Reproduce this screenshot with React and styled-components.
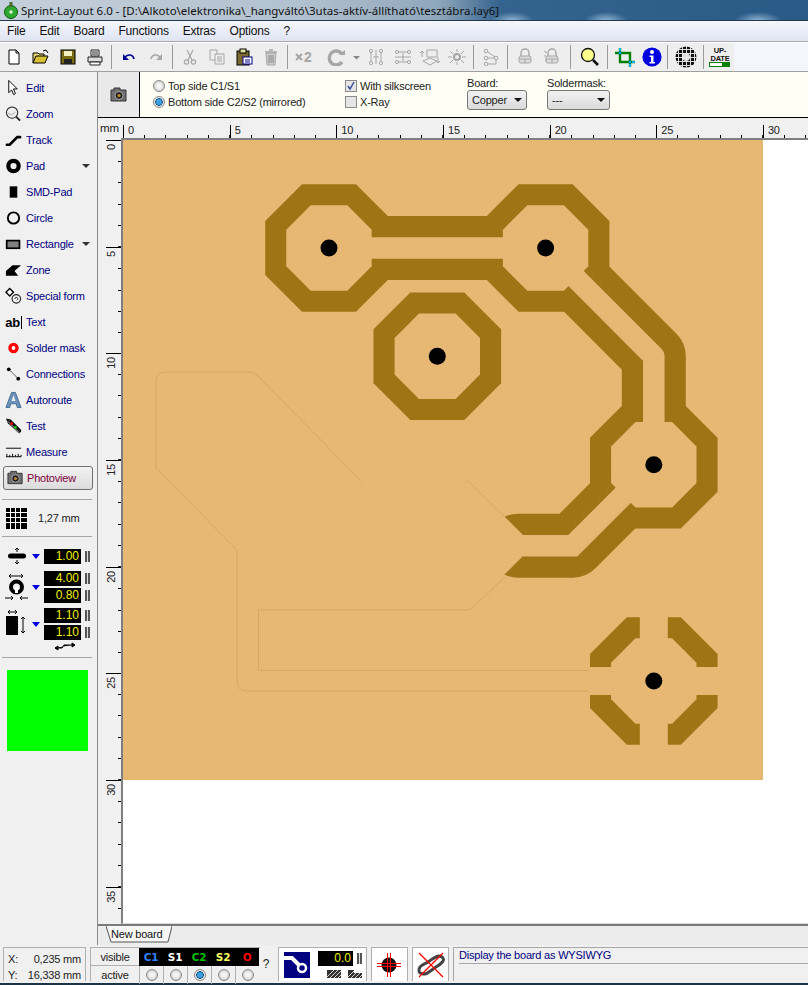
import styled, { createGlobalStyle } from "styled-components"

const GlobalStyle = createGlobalStyle`
  html, body { margin: 0; padding: 0; background: #f0f0f0; }
  * { box-sizing: border-box; }
`

const Window = styled.div`
  width: 808px;
  height: 985px;
  overflow: hidden;
  display: flex;
  flex-direction: column;
  font-family: "Liberation Sans", "Noto Sans", sans-serif;
  font-size: 11px;
  letter-spacing: -.2px;
  color: #222;
  background: #f0f0f0;
`
const TitleBar = styled.div`
  height: 21px;
  flex: none;
  display: flex;
  align-items: center;
  gap: 1px;
  padding-left: 2px;
  font-family: "Noto Sans", sans-serif;
  font-size: 11.5px;
  letter-spacing: 0;
  color: #111;
  white-space: nowrap;
  border-bottom: 1px solid #24384c;
  background:
    radial-gradient(ellipse 22px 9px at 512px 21px, rgba(180,215,240,.75), transparent),
    radial-gradient(ellipse 22px 9px at 606px 21px, rgba(180,215,240,.75), transparent),
    radial-gradient(ellipse 24px 9px at 758px 21px, rgba(180,215,240,.75), transparent),
    linear-gradient(90deg, #c4d0db 0, #b2c1cf 300px, #8ea6bb 440px, #34638e 500px, #2a5a87 808px);
`
const MenuBar = styled.div`
  height: 21px;
  flex: none;
  display: flex;
  align-items: center;
  padding-left: 7px;
  gap: 14px;
  font-size: 12px;
  color: #111;
  background: linear-gradient(#f4f6fb, #dfe4f3);
  border-bottom: 1px solid #a8a8a8;
`
const ToolBar = styled.div`
  height: 30px;
  flex: none;
  display: flex;
  align-items: center;
  background: #eeeeee;
  border-top: 1px solid #fff;
  border-bottom: 1px solid #a0a0a0;
`
const ToolRest = styled.div`
  flex: 1;
  align-self: stretch;
  background: #f3f6fc;
`
const ToolBtn = styled.div`
  width: ${p => p.$w || 27}px;
  height: 24px;
  flex: none;
  display: flex;
  align-items: center;
  justify-content: center;
`
const ToolSep = styled.div`
  width: ${p => p.$w || 7}px;
  height: 24px;
  flex: none;
  display: flex;
  justify-content: center;
  &::before {
    content: "";
    width: 1px;
    background: #9a9a9a;
  }
`
const Main = styled.div`
  flex: 1;
  min-height: 0;
  display: flex;
`
const Sidebar = styled.aside`
  width: 98px;
  flex: none;
  background: #f0f0f0;
  border-right: 1px solid #8e8e8e;
  padding-top: 3px;
  display: flex;
  flex-direction: column;
`
const SideItem = styled.div`
  height: 26px;
  flex: none;
  display: flex;
  align-items: center;
  padding-left: 5px;
  gap: 4px;
  color: #000080;
  position: relative;
`
const IconSlot = styled.span`
  width: 17px;
  height: 20px;
  flex: none;
  display: flex;
  align-items: center;
  justify-content: center;
`
const Caret = styled.span`
  width: 0;
  height: 0;
  border-left: 4px solid transparent;
  border-right: 4px solid transparent;
  border-top: 4px solid ${p => p.$color || "#333"};
  position: absolute;
  left: ${p => p.$left || 82}px;
  top: 11px;
`
const PhotoButton = styled.div`
  margin: 1px 4px 0 3px;
  height: 24px;
  flex: none;
  display: flex;
  align-items: center;
  gap: 3px;
  padding-left: 3px;
  color: #800040;
  border: 1px solid #707070;
  border-radius: 3px;
  background: linear-gradient(#f2f2f2, #dcdcdc);
`
const SideRule = styled.div`
  height: 1px;
  flex: none;
  margin: ${p => p.$m || "9px 5px 5px 2px"};
  background: #a6a6a6;
`
const GridRow = styled.div`
  height: 26px;
  flex: none;
  display: flex;
  align-items: center;
  padding-left: 6px;
  gap: 11px;
  color: #222;
`
const ValueBlock = styled.div`
  display: flex;
  align-items: center;
  padding-left: 4px;
  margin-bottom: ${p => p.$mb || 0}px;
  position: relative;
`
const ValueGlyph = styled.div`
  width: 26px;
  flex: none;
  display: flex;
  justify-content: center;
`
const BlueCaret = styled.span`
  width: 0;
  height: 0;
  margin: 0 4px 0 2px;
  flex: none;
  border-left: 4px solid transparent;
  border-right: 4px solid transparent;
  border-top: 5px solid #0000e0;
`
const ValueStack = styled.div`
  display: flex;
  flex-direction: column;
  gap: 2px;
`
const ValueRow = styled.div`
  display: flex;
  align-items: center;
  gap: 4px;
`
const ValueBox = styled.div`
  width: ${p => p.$w || 37}px;
  height: 15px;
  background: #000;
  color: #f0f000;
  font-size: 12px;
  letter-spacing: 0;
  line-height: 15px;
  text-align: right;
  padding-right: 2px;
`
const Grip = styled.span`
  width: 5px;
  height: 11px;
  flex: none;
  background: linear-gradient(90deg, #555 0 2px, #ddd 2px 3px, #555 3px 5px);
`
const SwapRow = styled.div`
  display: flex;
  justify-content: flex-end;
  padding-right: 21px;
  margin-top: 2px;
  height: 10px;
`
const GreenBox = styled.div`
  margin: 12px 0 0 7px;
  width: 81px;
  height: 81px;
  flex: none;
  background: #00ff00;
`
const Work = styled.div`
  flex: 1;
  min-width: 0;
  display: flex;
  flex-direction: column;
`
const PhotoBar = styled.div`
  height: 46px;
  flex: none;
  display: flex;
  background: #fffff6;
  border-bottom: 1px solid #000;
`
const CameraCell = styled.div`
  width: 42px;
  flex: none;
  display: flex;
  align-items: center;
  justify-content: center;
  background: #e9e9e9;
  border-right: 1px solid #000;
`
const OptionCol = styled.div`
  width: ${p => p.$w}px;
  flex: none;
  display: flex;
  flex-direction: column;
  padding: 7px 0 0 ${p => p.$pl || 0}px;
  gap: 2px;
`
const OptionLine = styled.div`
  height: 14px;
  display: flex;
  align-items: center;
  gap: 3px;
  color: #222;
  white-space: nowrap;
`
const Radio = styled.span`
  width: 12px;
  height: 12px;
  flex: none;
  border-radius: 50%;
  border: 1px solid #8a8a8a;
  background: ${p => p.$on
    ? "radial-gradient(circle, #3aa0e0 0 2.5px, #10507c 3.5px, #e8e8e8 4px)"
    : "radial-gradient(circle, #f4f4f4 0 2px, #d2d2d2 5px)"};
`
const Check = styled.span`
  width: 12px;
  height: 12px;
  flex: none;
  display: flex;
  border: 1px solid #8a8a8a;
  background: #e6e6e6;
`
const SelectCol = styled.div`
  width: ${p => p.$w}px;
  flex: none;
  padding-top: 5px;
  color: #222;
`
const SelectBox = styled.div`
  width: ${p => p.$w}px;
  height: 20px;
  margin-top: 1px;
  padding: 0 4px;
  display: flex;
  align-items: center;
  justify-content: space-between;
  border: 1px solid #777;
  border-radius: 3px;
  background: linear-gradient(#f2f2f2, #dadada);
  &::after {
    content: "";
    border-left: 4px solid transparent;
    border-right: 4px solid transparent;
    border-top: 4px solid #111;
  }
`
const HRuler = styled.div`
  height: 20px;
  flex: none;
  display: flex;
  align-items: flex-end;
  background: #f0f0f0;
  position: relative;
  padding-left: 25px;
`
const MmLabel = styled.span`
  position: absolute;
  left: 2px;
  top: 4px;
  font-size: 11.5px;
`
const HCell = styled.div`
  width: 106.67px;
  height: 13px;
  flex: none;
  font-size: 11px;
  line-height: 11px;
  padding-left: 4px;
  border-left: 1px solid #000;
  background: repeating-linear-gradient(90deg, transparent 0 20.33px, #000 20.33px 21.33px) bottom / 100% 3px no-repeat;
`
const CanvasRow = styled.div`
  flex: 1;
  min-height: 0;
  display: flex;
`
const VRuler = styled.div`
  width: 23px;
  flex: none;
  overflow: hidden;
  background: #f0f0f0;
  padding: 2px 0 0 8px;
  display: flex;
  flex-direction: column;
`
const VCell = styled.div`
  height: 106.67px;
  flex: none;
  border-top: 1px solid #000;
  font-size: 11px;
  line-height: 11px;
  padding-top: 3px;
  background: repeating-linear-gradient(180deg, transparent 0 20.33px, #000 20.33px 21.33px) right / 3px 100% no-repeat;
`
const VLabel = styled.span`
  display: block;
  writing-mode: vertical-rl;
  transform: rotate(180deg);
`
const Canvas = styled.div`
  flex: 1;
  min-width: 0;
  background: #fff;
  border-left: 2px solid #808080;
  border-top: 2px solid #808080;
  border-bottom: 1px solid #d8d8d8;
`
const Board = styled.div`
  width: 640px;
  height: 640px;
  background: #e6b873;
`
const BoardSvg = styled.svg`
  display: block;
  width: 640px;
  height: 640px;
`
const TabRow = styled.div`
  height: 21px;
  flex: none;
  padding-left: 8px;
  background: #ececec;
  border-top: 2px solid #7a7a7a;
`
const Tab = styled.div`
  width: 66px;
  height: 18px;
  padding-left: 5px;
  line-height: 16px;
  font-size: 11px;
  color: #111;
  position: relative;
`
const TabEdge = styled.svg`
  position: absolute;
  left: 0;
  top: 0;
  z-index: 0;
`
const TabLabel = styled.span`
  position: relative;
`
const StatusBar = styled.footer`
  height: 40px;
  flex: none;
  display: flex;
  align-items: stretch;
  background: #f0f0f0;
  padding: 2px 0 2px 3px;
  border-bottom: 2px solid #1d3346;
`
const CoordPanel = styled.div`
  width: 83px;
  flex: none;
  border: 1px solid #b0b0b0;
  border-bottom: 0;
  padding: 4px 4px 0 4px;
  color: #222;
  display: flex;
  flex-direction: column;
  gap: 3px;
`
const CoordLine = styled.div`
  height: 14px;
  display: flex;
  align-items: center;
  justify-content: space-between;
`
const LayerTable = styled.div`
  margin-left: 4px;
  width: 170px;
  flex: none;
  display: grid;
  grid-template-columns: 48px repeat(5, 24px);
  grid-template-rows: 18px 18px;
  border-left: 1px solid #b0b0b0;
  border-top: 1px solid #b0b0b0;
`
const RowName = styled.div`
  display: flex;
  align-items: center;
  justify-content: center;
  color: #222;
  border-bottom: ${p => p.$line ? "1px solid #b0b0b0" : "0"};
`
const LayerName = styled.div`
  background: #000;
  color: ${p => p.$color};
  font-family: "DejaVu Sans", sans-serif;
  font-weight: 700;
  font-size: 10.5px;
  display: flex;
  align-items: center;
  justify-content: center;
`
const LayerRadio = styled.div`
  display: flex;
  align-items: center;
  justify-content: center;
  border-left: 1px solid #b0b0b0;
`
const Hint = styled.div`
  width: 12px;
  flex: none;
  font-size: 12px;
  display: flex;
  align-items: center;
  justify-content: center;
`
const WhitePanel = styled.div`
  width: ${p => p.$w}px;
  margin-left: ${p => p.$ml || 4}px;
  flex: none;
  background: #fff;
  border: 1px solid #b0b0b0;
  border-bottom: 0;
  display: flex;
  align-items: center;
  padding-left: ${p => p.$pl || 0}px;
`
const DisplayStack = styled.div`
  margin-left: 8px;
  display: flex;
  flex-direction: column;
  align-items: flex-end;
  gap: 4px;
`
const HatchRow = styled.div`
  width: 35px;
  display: flex;
  justify-content: space-between;
`
const MessagePanel = styled.div`
  flex: 1;
  margin-left: 4px;
  border-left: 1px solid #a8a8a8;
  border-top: 1px solid #a8a8a8;
  padding-left: 5px;
  color: #000080;
`
const MessageLine = styled.div`
  height: 16px;
  line-height: 14px;
  border-bottom: 1px solid #a8a8a8;
`

// toolbar drawings
const Ico = ({ w = 18, h = 18, children }) => (
  <svg width={w} height={h} viewBox={`0 0 ${w} ${h}`} fill="none">{children}</svg>
)
const grey = "#a6a6a6"

const NewIcon = () => <Ico><path d="M4 2h7l3 3v11H4z" fill="#fff" stroke="#000" /><path d="M11 2v3h3" stroke="#000" /></Ico>
const OpenIcon = () => <Ico><path d="M1 15V5h5l1 1h5v2" fill="#e8d870" stroke="#000" /><path d="M1 15l3-7h12l-3 7z" fill="#d8c030" stroke="#000" /><path d="M11 3l3-1 2 3" stroke="#000" /></Ico>
const SaveIcon = () => <Ico><rect x="2" y="2" width="14" height="14" fill="#7a6a10" stroke="#000" /><rect x="5" y="3" width="8" height="5" fill="#f0f0c0" /><rect x="5" y="11" width="8" height="5" fill="#222" /></Ico>
const PrintIcon = () => <Ico><path d="M5 2h8v6H5z" fill="#fff" stroke="#222" /><path d="M2 9h14v5H2z" fill="#ddd" stroke="#222" /><path d="M4 14h10v3H4z" fill="#fff" stroke="#222" /><path d="M6 4h6M6 6h6" stroke="#222" /></Ico>
const UndoIcon = ({ c = "#000090" }) => <Ico><path d="M5 9c3-3 8-3 9 2" stroke={c} strokeWidth="1.6" /><path d="M3 6v6h6z" fill={c} /></Ico>
const RedoIcon = () => <Ico><path d="M13 9c-3-3-8-3-9 2" stroke={grey} strokeWidth="1.6" /><path d="M15 6v6H9z" fill={grey} /></Ico>
const CutIcon = () => <Ico><path d="M6 2l5 10M12 2L7 12" stroke={grey} strokeWidth="1.2" /><circle cx="5.500" cy="14" r="2.200" stroke={grey} strokeWidth="1.2" /><circle cx="12.500" cy="14" r="2.200" stroke={grey} strokeWidth="1.2" /></Ico>
const CopyIcon = () => <Ico><path d="M2 2h7v10H2z" fill="#eee" stroke={grey} /><path d="M7 6h9v10H7z" fill="#eee" stroke={grey} /><path d="M9 9h5M9 11h5M9 13h5" stroke={grey} /></Ico>
const PasteIcon = () => <Ico><rect x="2" y="3" width="12" height="14" fill="#7a6a30" stroke="#000" /><rect x="5" y="1" width="6" height="4" fill="#e0e0a0" stroke="#000" /><rect x="8" y="9" width="9" height="7" fill="#fff" stroke="#000090" /><path d="M10 12h5M10 14h5" stroke="#000090" /></Ico>
const TrashIcon = () => <Ico><path d="M4 5h10l-1 12H5z" fill="#ccc" stroke={grey} /><path d="M3 4h12M7 2h4" stroke={grey} strokeWidth="1.6" /><path d="M7 7v8M9 7v8M11 7v8" stroke="#888" /></Ico>
const TimesTwo = () => <Ico w={26}><path d="M3 6l6 6M9 6l-6 6" stroke={grey} strokeWidth="2" /><text x="11" y="14" fontFamily="Liberation Sans" fontWeight="700" fontSize="14" fill={grey}>2</text></Ico>
const RotateIcon = () => <Ico w={20}><path d="M16 6a7 7 0 1 0 0 8" stroke={grey} strokeWidth="3.4" /><path d="M13 7h6V2z" fill={grey} /></Ico>
const SmallCaret = () => <Ico w={9} h={5}><path d="M1 1h7L4.500 4.500z" fill="#888" /></Ico>
const MirrorIcon = () => <Ico><g stroke={grey}><circle cx="4" cy="3" r="1.6" /><circle cx="4" cy="15" r="1.6" /><circle cx="14" cy="3" r="1.6" /><circle cx="14" cy="15" r="1.6" /><path d="M4 5v8M14 5v8M9 2v14M6 9h6" /></g></Ico>
const AlignIcon = () => <Ico><g stroke={grey}><circle cx="3" cy="4" r="1.6" /><circle cx="15" cy="4" r="1.6" /><circle cx="3" cy="14" r="1.6" /><circle cx="15" cy="14" r="1.6" /><path d="M5 4h8M5 14h8M1 9h16M9 5v8" /></g></Ico>
const LayerSwapIcon = () => <Ico w={22}><g stroke={grey}><path d="M8 2h10v7H8zM3 9V3M1 5l2-2 2 2M4 13l7-3 7 3-7 4z" /><path d="M19 9v6M17 13l2 2 2-2" /></g></Ico>
const ExplodeIcon = () => <Ico w={20}><g stroke={grey}><circle cx="10" cy="9" r="3" strokeWidth="2" /><path d="M1 9h4M15 9h4M10 1v3M10 14v3M3 3l3 3M17 3l-3 3M3 15l3-3M17 15l-3-3" /></g></Ico>
const NodesIcon = () => <Ico><g stroke={grey}><circle cx="4" cy="3" r="1.8" /><circle cx="4" cy="10" r="1.8" /><circle cx="4" cy="16" r="1.8" /><circle cx="14" cy="10" r="1.8" /><path d="M6 4l7 5M6 10h6M6 16h8v-4M14 10" /></g></Ico>
const LockIcon = ({ x }) => <Ico><path d="M5 8V5a4 4 0 0 1 8 0v3" stroke={grey} strokeWidth="1.4" /><rect x="3" y="8" width="12" height="7" rx="2" fill="#ddd" stroke={grey} /><path d="M3 11h12M9 11v4" stroke={grey} />{x && <path d="M1 3l3 2M1 8h2M2 13l2-1" stroke={grey} />}</Ico>
const LoupeIcon = () => <Ico w={20} h={20}><circle cx="8" cy="8" r="6.500" fill="#ffff90" stroke="#111" strokeWidth="1.3" /><path d="M13 13l5 5" stroke="#111" strokeWidth="2.6" /></Ico>
const CropIcon = () => <Ico w={22} h={20}><path d="M6 1v14h15M1 6h15v14" stroke="#008000" strokeWidth="2.4" /><path d="M4.800 4.800h2.400v2.400H4.800zM14.800 13.800h2.400v2.400h-2.400z" fill="#00a0ff" /><path d="M5 1h2v3H5zM18 14h3v2h-3zM15 17h2v3h-2z" fill="#00b0ff" /></Ico>
const InfoIcon = () => <Ico w={20} h={20}><circle cx="10" cy="10" r="9.600" fill="#0000e0" /><circle cx="10" cy="5" r="2" fill="#fff" /><path d="M7.500 8.500h4V15H13v1.500H7.500V15H9V10H7.500z" fill="#fff" /></Ico>
const GridBallIcon = () => (
  <Ico w={22} h={22}>
    <circle cx="11" cy="11" r="10.500" fill="#111" />
    <circle cx="11" cy="11" r="4" fill="#ddd" />
    <path d="M0 3.500h22M0 7.500h22M0 11.500h22M0 15.500h22M0 19.500h22M3.500 0v22M7.500 0v22M11.500 0v22M15.500 0v22M19.500 0v22" stroke="#eee" strokeWidth=".9" />
  </Ico>
)
const UpdateIcon = () => (
  <Ico w={22} h={22}>
    <text x="11" y="7" textAnchor="middle" fontFamily="Liberation Sans" fontWeight="700" fontSize="7.5" fill="#111">UP-</text>
    <text x="11" y="14.5" textAnchor="middle" fontFamily="Liberation Sans" fontWeight="700" fontSize="7.5" fill="#111">DATE</text>
    <rect x=".5" y="16.5" width="20" height="4" fill="#fff" stroke="#008000" />
    <rect x="13" y="16.5" width="8" height="4" fill="#008000" />
  </Ico>
)

// sidebar drawings
const CursorIcon = () => <Ico><path d="M4 1v13l3-3 2 5 2-1-2-5h4z" fill="#fff" stroke="#000" /></Ico>
const ZoomIcon = () => <Ico><circle cx="7.500" cy="7.500" r="6" fill="#eee" stroke="#222" strokeWidth="1.1" /><path d="M3 8l4 2 4-3" stroke="#aaa" /><path d="M12 12l4 4" stroke="#222" strokeWidth="2" /></Ico>
const TrackIcon = () => <Ico><path d="M2 14h3l8-8h3" stroke="#000" strokeWidth="2.8" strokeLinecap="round" /></Ico>
const PadIcon = () => <Ico><circle cx="9" cy="9" r="5.500" stroke="#000" strokeWidth="4.4" /></Ico>
const SmdIcon = () => <Ico><rect x="5" y="3" width="8" height="12" fill="#000" /></Ico>
const CircleIcon = () => <Ico><circle cx="9" cy="9" r="6" stroke="#000" strokeWidth="2" /></Ico>
const RectIcon = () => <Ico w={20}><rect x="2" y="5" width="15" height="9" fill="#808080" stroke="#000" strokeWidth="2" /></Ico>
const ZoneIcon = () => <Ico><path d="M1 15V10L8 4h9L10 10l4 5z" fill="#000" /></Ico>
const SpecialIcon = () => <Ico><path d="M5 1l4 4-4 4-4-4z" fill="#fff" stroke="#000" strokeWidth="1.5" /><circle cx="12" cy="12" r="4.500" stroke="#222" strokeWidth="1.2" /><path d="M10.500 12a1.500 1.500 0 1 1 2 1.400" stroke="#222" /></Ico>
const TextGlyph = styled.span`
  font-family: "Liberation Sans", sans-serif;
  font-weight: 700;
  font-size: 13px;
  color: #000;
  border-right: 1px solid #000;
  line-height: 13px;
  padding-right: 1px;
  letter-spacing: -.4px;
`
const SolderIcon = () => <Ico><circle cx="9" cy="9" r="5.500" fill="#f00" /><circle cx="9" cy="9" r="2" fill="#fff" /></Ico>
const ConnIcon = () => <Ico><circle cx="4" cy="4" r="2" fill="#000" /><circle cx="14" cy="14" r="2" fill="#000" /><path d="M5 5l8 8" stroke="#555" /></Ico>
const RouteIcon = () => (
  <Ico w={18} h={20}>
    <path d="M1 18L7 2h4l6 16h-4l-1-4H6l-1 4z" fill="#6f93b8" stroke="#3f6a94" />
    <path d="M7 11h4L9 5z" fill="#f0f0f0" />
  </Ico>
)
const TestIcon = () => (
  <Ico>
    <path d="M1 1l5 1 11 11v2l-2 2L3 6z" fill="#111" />
    <path d="M3 4l12 12" stroke="#fff" strokeWidth=".7" />
    <circle cx="7" cy="6.500" r="1.500" fill="#f00" />
    <circle cx="11" cy="10.500" r="1.500" fill="#0c0" />
  </Ico>
)
const MeasureIcon = () => <Ico><path d="M1 5h16M1 14h16M2 14v-3M5 14v-2M8 14v-3M11 14v-2M14 14v-3M17 14v-2" stroke="#000" /></Ico>
const CameraIcon = () => (
  <Ico w={18} h={16}>
    <path d="M4 3V1h6v2h6v11H1V3z" fill="#6f6f72" stroke="#333" />
    <circle cx="9" cy="8.500" r="4" fill="#222" stroke="#aaa" />
    <circle cx="9" cy="8.500" r="1.600" fill="#c88a30" />
  </Ico>
)
const GridIcon = () => (
  <svg width="21" height="21" viewBox="0 0 21 21">
    <rect width="21" height="21" fill="#000" />
    <path d="M4.500 0v21M9.500 0v21M14.500 0v21M0 4.500h21M0 9.500h21M0 14.500h21" stroke="#fff" />
  </svg>
)
const WidthGlyph = () => <Ico w={20} h={16}><rect x="1" y="5.500" width="18" height="5" rx="2.500" fill="#000" /><path d="M10 0v4M8 2l2-2 2 2M10 16v-4M8 14l2 2 2-2" stroke="#000" /></Ico>
const PadGlyph = () => (
  <Ico w={26} h={30}>
    <path d="M5 4h14M5 4l2-2M5 4l2 2M19 4l-2-2M19 4l-2 2" stroke="#000" />
    <circle cx="12.500" cy="15" r="5.500" stroke="#000" strokeWidth="4" />
    <path d="M11 15h3v6h-3z" fill="#fff" />
    <path d="M1 26h8M9 26l-2-2M9 26l-2 2M24 26h-8M16 26l2-2M16 26l2 2" stroke="#000" />
  </Ico>
)
const SmdGlyph = () => (
  <Ico w={24} h={28}>
    <path d="M3 2h9M3 2l2-2M3 2l2 2M12 2l-2-2M12 2l-2 2" stroke="#000" />
    <rect x="1" y="6" width="12" height="19" fill="#000" />
    <path d="M18 7v16M18 7l-2 2M18 7l2 2M18 23l-2-2M18 23l2-2" stroke="#000" />
  </Ico>
)
const SwapGlyph = () => <Ico w={22} h={10}><path d="M1 6h7l2-3h8M1 6l3-2v4zM21 3l-3-2v4z" fill="#000" stroke="#000" /></Ico>

const ViaBadge = () => (
  <svg width="26" height="26" viewBox="0 0 26 26">
    <rect width="26" height="26" fill="#000080" />
    <path d="M0 6h8l9 9" stroke="#fff" strokeWidth="4" fill="none" />
    <circle cx="18" cy="16" r="4" fill="#000080" stroke="#fff" strokeWidth="2.5" />
  </svg>
)
const Hatch = ({ stepped }) => (
  <svg width="14" height="8" viewBox="0 0 14 8">
    <path d={stepped ? "M0 0h6v3h8v5H0z" : "M0 0h14v8H0z"} fill="#333" />
    <path d="M0 7l7-7M3 8l8-8M7 8l7-7M11 8l3-3" stroke="#fff" strokeWidth=".8" />
  </svg>
)
const Crosshair = () => (
  <svg width="24" height="24" viewBox="0 0 24 24">
    <circle cx="12" cy="12" r="7.500" fill="#111" />
    <path d="M10.500 0v24M13.500 0v24M0 10.500h24M0 13.500h24" stroke="#f00" strokeWidth="1" />
  </svg>
)
const NoTrack = () => (
  <svg width="30" height="28" viewBox="0 0 30 28" fill="none">
    <path d="M3 19c0-5 5-5 9-8s10-8 14-5-1 7-6 10-9 8-13 7-4-2-4-4z" stroke="#444" strokeWidth="3" />
    <path d="M3 2l24 24M27 2L3 26" stroke="#f00" strokeWidth="1.3" />
  </svg>
)
const WindowLogo = () => (
  <svg width="18" height="18" viewBox="0 0 18 18">
    <circle cx="9" cy="11" r="6.500" fill="#2fa82f" stroke="#0c5c0c" />
    <rect x="7.500" y="1" width="3" height="5" fill="#4a6a30" />
    <circle cx="9" cy="11" r="1.800" fill="#d8f0d0" />
  </svg>
)

// board drawing, in page coordinates of the screenshot
const X = [329, 437.3, 545.6, 653.8]
const octagon = (cx, cy, half, flat) => [
  [cx - flat, cy - half], [cx + flat, cy - half], [cx + half, cy - flat], [cx + half, cy + flat],
  [cx + flat, cy + half], [cx - flat, cy + half], [cx - half, cy + flat], [cx - half, cy - flat],
].map(p => p.join(",")).join(" ")

const pads = [[X[0], 248], [X[2], 248], [X[1], 356.3], [X[3], 464.7]]
const thermal = [X[3], 681]
const copper = "#9e7415"
const base = "#e6b873"
const outline = "#d6a75d"
const traceA = `M${X[0]} 248H${X[2]}`
const traceB = `M${X[2]} 248L${X[3]} 356.4V464.7`
const traceC = `M${X[3]} 464.7L572.8 545.7H518`

const BoardArt = () => (
  <BoardSvg viewBox="123 140 640 640" fill="none">
    {pads.map(([x, y]) => <polygon key={`${x}${y}`} points={octagon(x, y, 63.8, 27)} fill={copper} />)}
    <polygon points={octagon(thermal[0], thermal[1], 63.8, 27)} fill={copper} />
    <g stroke={copper} strokeWidth="64">
      <path d={traceA} />
      <path d={traceB} strokeLinejoin="round" />
      <path d={traceC} strokeLinejoin="round" strokeLinecap="round" />
    </g>
    {pads.map(([x, y]) => <polygon key={`${x}${y}`} points={octagon(x, y, 42.7, 18.3)} fill={base} />)}
    <polygon points={octagon(thermal[0], thermal[1], 42.7, 18.3)} fill={base} />
    <g stroke={base} strokeWidth="21.5">
      <path d={traceA} />
      <path d={traceB} strokeLinejoin="round" />
      <path d={`M${X[3]} 464.7L572.8 545.7H523`} />
    </g>
    <polygon points="470,482 523,535 523,556 470,609" fill={base} />
    <path d={`M${thermal[0] - 14} 610v142h28v-142zM${thermal[0] - 70} ${thermal[1] - 14}h140v28h-140z`} fill={base} />
    <g stroke={outline}>
      <path d="M589 691H247q-10 0-10-10V550l-81-82V382q0-10 10-10h84q4 0 7 3l104 106" />
      <path d="M465 481q3 0 5 2l35 34" />
      <path d="M505 577l-33 31q-2 2-5 2H258.500v60.500H589" />
    </g>
    {[...pads, thermal].map(([x, y]) => <circle key={`${x}d${y}`} cx={x} cy={y} r="8.500" fill="#000" />)}
  </BoardSvg>
)

const sideTools = [
  ["Edit", <CursorIcon />], ["Zoom", <ZoomIcon />], ["Track", <TrackIcon />], ["Pad", <PadIcon />, true],
  ["SMD-Pad", <SmdIcon />], ["Circle", <CircleIcon />], ["Rectangle", <RectIcon />, true], ["Zone", <ZoneIcon />],
  ["Special form", <SpecialIcon />], ["Text", <TextGlyph>ab</TextGlyph>], ["Solder mask", <SolderIcon />],
  ["Connections", <ConnIcon />], ["Autoroute", <RouteIcon />], ["Test", <TestIcon />], ["Measure", <MeasureIcon />],
]
const layers = [["C1", "#2f7fff"], ["S1", "#ffffff"], ["C2", "#00c000"], ["S2", "#ffff60"], ["O", "#ff0000"]]
const menus = ["File", "Edit", "Board", "Functions", "Extras", "Options", "?"]

export default function App() {
  return (
    <Window>
      <GlobalStyle />
      <TitleBar>
        <WindowLogo />
        <span>Sprint-Layout 6.0 - [D:\Alkoto\elektronika\_hangváltó\3utas-aktív-állítható\tesztábra.lay6]</span>
      </TitleBar>
      <MenuBar>{menus.map(m => <span key={m}>{m}</span>)}</MenuBar>
      <ToolBar>
        <ToolBtn><NewIcon /></ToolBtn><ToolBtn><OpenIcon /></ToolBtn><ToolBtn><SaveIcon /></ToolBtn><ToolBtn><PrintIcon /></ToolBtn>
        <ToolSep />
        <ToolBtn><UndoIcon /></ToolBtn><ToolBtn><RedoIcon /></ToolBtn>
        <ToolSep />
        <ToolBtn><CutIcon /></ToolBtn><ToolBtn><CopyIcon /></ToolBtn><ToolBtn><PasteIcon /></ToolBtn><ToolBtn><TrashIcon /></ToolBtn>
        <ToolSep />
        <ToolBtn $w={30}><TimesTwo /></ToolBtn><ToolBtn $w={30}><RotateIcon /></ToolBtn><ToolBtn $w={11}><SmallCaret /></ToolBtn>
        <ToolBtn><MirrorIcon /></ToolBtn><ToolBtn><AlignIcon /></ToolBtn><ToolBtn><LayerSwapIcon /></ToolBtn><ToolBtn><ExplodeIcon /></ToolBtn>
        <ToolSep />
        <ToolBtn><NodesIcon /></ToolBtn>
        <ToolSep />
        <ToolBtn><LockIcon /></ToolBtn><ToolBtn><LockIcon x /></ToolBtn>
        <ToolSep $w={11} />
        <ToolBtn><LoupeIcon /></ToolBtn>
        <ToolSep $w={8} />
        <ToolBtn><CropIcon /></ToolBtn><ToolBtn><InfoIcon /></ToolBtn>
        <ToolSep $w={5} />
        <ToolBtn $w={32}><GridBallIcon /></ToolBtn>
        <ToolSep $w={3} />
        <ToolBtn $w={29}><UpdateIcon /></ToolBtn>
        <ToolRest />
      </ToolBar>
      <Main>
        <Sidebar>
          {sideTools.map(([name, icon, more]) => (
            <SideItem key={name}>
              <IconSlot>{icon}</IconSlot>
              {name}
              {more && <Caret />}
            </SideItem>
          ))}
          <PhotoButton><IconSlot><CameraIcon /></IconSlot>Photoview</PhotoButton>
          <SideRule />
          <GridRow><GridIcon />1,27 mm</GridRow>
          <SideRule $m="5px 5px 11px 2px" />
          <ValueBlock $mb={7}>
            <ValueGlyph><WidthGlyph /></ValueGlyph>
            <BlueCaret />
            <ValueRow><ValueBox>1.00</ValueBox><Grip /></ValueRow>
          </ValueBlock>
          <ValueBlock $mb={5}>
            <ValueGlyph><PadGlyph /></ValueGlyph>
            <BlueCaret />
            <ValueStack>
              <ValueRow><ValueBox>4.00</ValueBox><Grip /></ValueRow>
              <ValueRow><ValueBox>0.80</ValueBox><Grip /></ValueRow>
            </ValueStack>
          </ValueBlock>
          <ValueBlock>
            <ValueGlyph><SmdGlyph /></ValueGlyph>
            <BlueCaret />
            <ValueStack>
              <ValueRow><ValueBox>1.10</ValueBox><Grip /></ValueRow>
              <ValueRow><ValueBox>1.10</ValueBox><Grip /></ValueRow>
            </ValueStack>
          </ValueBlock>
          <SwapRow><SwapGlyph /></SwapRow>
          <SideRule $m="5px 5px 0 2px" />
          <GreenBox />
        </Sidebar>
        <Work>
          <PhotoBar>
            <CameraCell><CameraIcon /></CameraCell>
            <OptionCol $w={205} $pl={13}>
              <OptionLine><Radio />Top side C1/S1</OptionLine>
              <OptionLine><Radio $on />Bottom side C2/S2 (mirrored)</OptionLine>
            </OptionCol>
            <OptionCol $w={122}>
              <OptionLine>
                <Check><svg width="10" height="10" viewBox="0 0 10 10"><path d="M2 5l2 3 4-7" stroke="#3a4f9a" strokeWidth="1.5" fill="none" /></svg></Check>
                With silkscreen
              </OptionLine>
              <OptionLine><Check />X-Ray</OptionLine>
            </OptionCol>
            <SelectCol $w={80}>Board:<SelectBox $w={60}>Copper</SelectBox></SelectCol>
            <SelectCol $w={80}>Soldermask:<SelectBox $w={63}>---</SelectBox></SelectCol>
          </PhotoBar>
          <HRuler>
            <MmLabel>mm</MmLabel>
            {[0, 5, 10, 15, 20, 25, 30].map(n => <HCell key={n}>{n}</HCell>)}
          </HRuler>
          <CanvasRow>
            <VRuler>
              {[0, 5, 10, 15, 20, 25, 30, 35].map(n => <VCell key={n}><VLabel>{n}</VLabel></VCell>)}
            </VRuler>
            <Canvas><Board><BoardArt /></Board></Canvas>
          </CanvasRow>
          <TabRow>
            <Tab>
              <TabEdge width="66" height="18" viewBox="0 0 66 18">
                <path d="M0 0l5 16h57l4-16" fill="#f7f7f7" stroke="#555" />
              </TabEdge>
              <TabLabel>New board</TabLabel>
            </Tab>
          </TabRow>
        </Work>
      </Main>
      <StatusBar>
        <CoordPanel>
          <CoordLine><span>X:</span><span>0,235 mm</span></CoordLine>
          <CoordLine><span>Y:</span><span>16,338 mm</span></CoordLine>
        </CoordPanel>
        <LayerTable>
          <RowName $line>visible</RowName>
          {layers.map(([n, c]) => <LayerName key={n} $color={c}>{n}</LayerName>)}
          <RowName>active</RowName>
          {layers.map(([n], i) => <LayerRadio key={n}><Radio $on={i === 2} /></LayerRadio>)}
        </LayerTable>
        <Hint>?</Hint>
        <WhitePanel $w={89} $ml={6} $pl={5}>
          <ViaBadge />
          <DisplayStack>
            <ValueRow><ValueBox $w={35}>0.0</ValueBox><Grip /></ValueRow>
            <HatchRow><Hatch /><Hatch stepped /></HatchRow>
          </DisplayStack>
        </WhitePanel>
        <WhitePanel $w={37} $pl={5}><Crosshair /></WhitePanel>
        <WhitePanel $w={37} $pl={3}><NoTrack /></WhitePanel>
        <MessagePanel><MessageLine>Display the board as WYSIWYG</MessageLine></MessagePanel>
      </StatusBar>
    </Window>
  )
}
